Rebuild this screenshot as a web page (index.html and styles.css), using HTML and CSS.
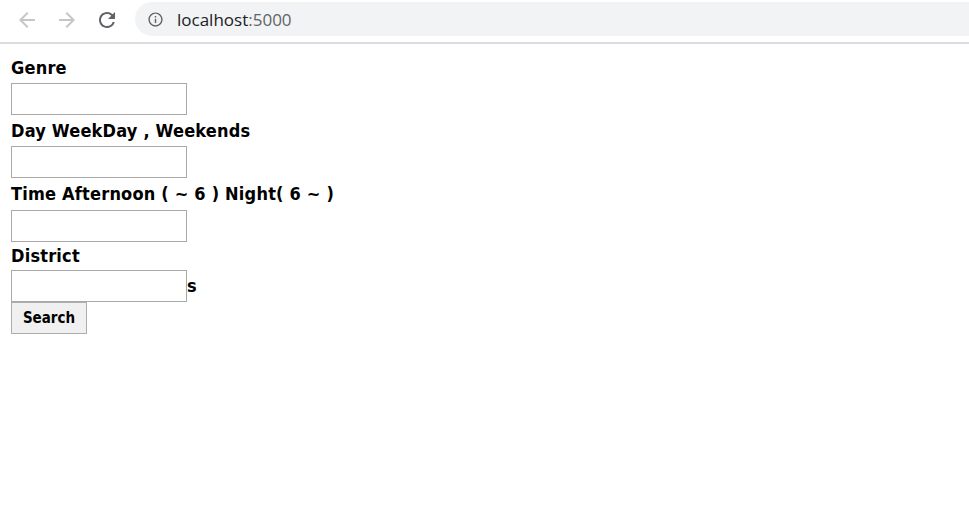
FILE: index.html
```html
<!DOCTYPE html>
<html lang="en">
<head>
<meta charset="utf-8">
<title>localhost:5000</title>
<link rel="stylesheet" href="styles.css">
</head>
<body>
<header class="toolbar">
  <div class="nav-btn">
    <svg width="24" height="24" viewBox="0 0 24 24"><path fill="#c4c6c9" d="M20 11H7.83l5.59-5.59L12 4l-8 8 8 8 1.41-1.41L7.83 13H20v-2z"/></svg>
  </div>
  <div class="nav-btn">
    <svg width="24" height="24" viewBox="0 0 24 24"><path fill="#c4c6c9" d="M12 4l-1.41 1.41L16.17 11H4v2h12.17l-5.58 5.59L12 20l8-8z"/></svg>
  </div>
  <div class="nav-btn">
    <svg width="24" height="24" viewBox="0 0 24 24"><path fill="#5f6368" d="M17.65 6.35A7.958 7.958 0 0 0 12 4c-4.42 0-7.99 3.58-7.99 8s3.57 8 7.99 8c3.73 0 6.84-2.55 7.73-6h-2.08A5.99 5.99 0 0 1 12 18c-3.31 0-6-2.69-6-6s2.69-6 6-6c1.66 0 3.14.69 4.22 1.78L13 11h7V4l-2.35 2.35z"/></svg>
  </div>
  <div class="omnibox">
    <svg class="info" width="17" height="17" viewBox="0 0 24 24"><path fill="#5f6368" d="M11 7h2v2h-2zm0 4h2v6h-2zm1-9C6.48 2 2 6.48 2 12s4.48 10 10 10 10-4.48 10-10S17.52 2 12 2zm0 18c-4.41 0-8-3.59-8-8s3.59-8 8-8 8 3.590 8 8-3.59 8-8 8z"/></svg>
    <span class="url">localhost<span class="port">:5000</span></span>
  </div>
</header>
<form class="form">
  <label class="lbl">Genre</label>
  <input class="field" type="text">
  <label class="lbl">Day WeekDay , Weekends</label>
  <input class="field" type="text">
  <label class="lbl lbl-tall">Time Afternoon ( ~ 6 ) Night( 6 ~ )</label>
  <input class="field" type="text">
  <label class="lbl lbl-short">District</label>
  <div class="row">
    <input class="field" type="text"><span class="suffix">s</span>
  </div>
  <button class="btn" type="button">Search</button>
</form>
</body>
</html>
```
FILE: styles.css
```css
html, body {
  margin: 0;
  padding: 0;
  background: #ffffff;
}

.toolbar {
  display: flex;
  align-items: flex-start;
  height: 44px;
  padding: 2px 0 0 7px;
  box-sizing: border-box;
  border-bottom: 2px solid #dadce0;
  background: #ffffff;
  overflow: hidden;
}

.nav-btn {
  width: 40px;
  height: 36px;
  display: flex;
  align-items: center;
  justify-content: center;
  flex: none;
}

.omnibox {
  flex: 1;
  margin-left: 8px;
  margin-right: -40px;
  height: 34px;
  border-radius: 17px;
  background: #f1f3f4;
  display: flex;
  align-items: center;
}

.info {
  margin-left: 12px;
  flex: none;
}

.url {
  margin-left: 13px;
  font-family: "Open Sans", "Noto Sans", sans-serif;
  font-size: 17px;
  color: #202124;
}

.port {
  color: #5f6368;
}

.form {
  display: flex;
  flex-direction: column;
  align-items: flex-start;
  padding: 8px 11px;
  font-family: "DejaVu Sans Condensed", "DejaVu Sans", sans-serif;
  font-stretch: condensed;
  font-weight: bold;
  font-size: 18px;
  letter-spacing: 0.2px;
  color: #000000;
}

.lbl {
  display: block;
  height: 31px;
  line-height: 31px;
  white-space: nowrap;
}

.lbl-tall {
  height: 32px;
  line-height: 32px;
}

.lbl-short {
  height: 28px;
  line-height: 28px;
}

.field {
  width: 176px;
  height: 32px;
  box-sizing: border-box;
  margin: 0;
  border: 1px solid #a9a9a9;
  border-radius: 0;
  background: #ffffff;
  padding: 1px 2px;
}

.row {
  display: flex;
  align-items: center;
}

.suffix {
  line-height: 22px;
}

.btn {
  width: 76px;
  height: 32px;
  margin: 0;
  box-sizing: border-box;
  border: 1px solid #adadad;
  border-radius: 0;
  background: #f0f0f0;
  font-family: "DejaVu Sans Condensed", "DejaVu Sans", sans-serif;
  font-stretch: condensed;
  font-weight: bold;
  font-size: 15px;
  color: #000000;
  padding: 0;
}
```
